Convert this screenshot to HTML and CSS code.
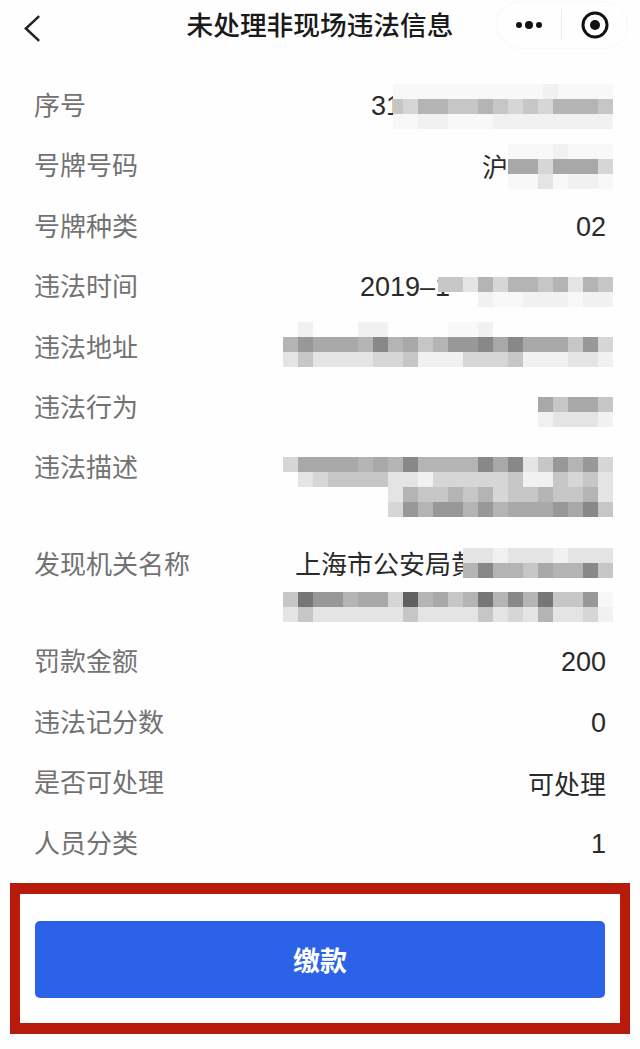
FILE: index.html
```html
<!DOCTYPE html>
<html lang="zh-CN">
<head>
<meta charset="utf-8">
<title>未处理非现场违法信息</title>
<link rel="stylesheet" href="styles.css">
</head>
<body>
<header class="nav">
  <svg class="back" viewBox="0 0 20 30" aria-hidden="true"><path d="M17 2 3 15l14 13" /></svg>
  <h1 class="title">未处理非现场违法信息</h1>
  <div class="capsule">
    <span class="dots"><i></i><i class="mid"></i><i></i></span>
    <span class="divider"></span>
    <svg class="target" viewBox="0 0 28 28" aria-hidden="true"><circle cx="14" cy="14" r="12" /><circle class="core" cx="14" cy="14" r="5" /></svg>
  </div>
</header>
<main class="list">
  <div class="row">
    <span class="label">序号</span>
    <div class="value">31
      <div class="mosaic over8">
        <div class="line"><i class="kx"></i><i class="kx"></i><i class="kx"></i><i class="kx"></i><i class="kx"></i><i class="kx"></i><i class="kx"></i><i class="kx"></i><i class="kx"></i><i class="kx"></i><i class="kf"></i><i class="kx"></i><i class="kx"></i><i class="kx"></i><i class="kx n10"></i></div>
        <div class="line"><i class="kc n10"></i><i class="kd"></i><i class="kb"></i><i class="kb"></i><i class="kc"></i><i class="kc"></i><i class="kb"></i><i class="kc"></i><i class="kd"></i><i class="kc"></i><i class="kd"></i><i class="kb"></i><i class="kb"></i><i class="kb"></i><i class="kc"></i></div>
        <div class="line"><i class="kx n10"></i><i class="kx"></i><i class="kf"></i><i class="kf"></i><i class="kx"></i><i class="kx"></i><i class="kx"></i><i class="kf"></i><i class="kf"></i><i class="kf"></i><i class="kf"></i><i class="kf"></i><i class="kf"></i><i class="kf"></i><i class="kf"></i></div>
      </div>
    </div>
  </div>
  <div class="row">
    <span class="label">号牌号码</span>
    <div class="value cjk">沪
      <div class="mosaic">
        <div class="line"><i class="kx"></i><i class="kx"></i><i class="kx"></i><i class="kf"></i><i class="kx"></i><i class="kx"></i><i class="kx"></i></div>
        <div class="line"><i class="ka"></i><i class="ka"></i><i class="kd"></i><i class="ka"></i><i class="ka"></i><i class="ka"></i><i class="kd"></i></div>
        <div class="line"><i class="kx"></i><i class="kx"></i><i class="ke"></i><i class="kx"></i><i class="kf"></i><i class="kf"></i><i class="kx"></i></div>
      </div>
    </div>
  </div>
  <div class="row">
    <span class="label">号牌种类</span>
    <div class="value">02</div>
  </div>
  <div class="row">
    <span class="label">违法时间</span>
    <div class="value">2019–1
      <div class="mosaic up3 over12">
        <div class="line"><i class="k0"></i></div>
        <div class="line"><i class="kc n10"></i><i class="kc"></i><i class="ke"></i><i class="kb"></i><i class="kd"></i><i class="kb"></i><i class="kb"></i><i class="kc"></i><i class="kb"></i><i class="ke"></i><i class="kb"></i><i class="kc"></i></div>
        <div class="line"><i class="k0 n10"></i><i class="k0"></i><i class="k0"></i><i class="kf"></i><i class="kx"></i><i class="kx"></i><i class="kf"></i><i class="kf"></i><i class="kf"></i><i class="kx"></i><i class="kf"></i><i class="kf"></i></div>
      </div>
    </div>
  </div>
  <div class="row">
    <span class="label">违法地址</span>
    <div class="value">
      <div class="mosaic up3">
        <div class="line"><i class="k0"></i><i class="kf"></i><i class="k0"></i><i class="k0"></i><i class="k0"></i><i class="kf"></i><i class="kf"></i><i class="k0"></i><i class="k0"></i><i class="k0"></i><i class="k0"></i><i class="kx"></i><i class="kx"></i><i class="kf"></i><i class="k0"></i><i class="k0"></i><i class="k0"></i><i class="k0"></i><i class="k0"></i><i class="k0"></i><i class="k0"></i><i class="k0"></i></div>
        <div class="line"><i class="kb"></i><i class="k9"></i><i class="ka"></i><i class="ka"></i><i class="ka"></i><i class="kb"></i><i class="k8"></i><i class="kb"></i><i class="ka"></i><i class="kc"></i><i class="kb"></i><i class="k9"></i><i class="k9"></i><i class="k8"></i><i class="ka"></i><i class="k8"></i><i class="ka"></i><i class="ka"></i><i class="ka"></i><i class="kc"></i><i class="k9"></i><i class="kd"></i></div>
        <div class="line"><i class="ke"></i><i class="kc"></i><i class="ke"></i><i class="ke"></i><i class="ke"></i><i class="ke"></i><i class="kd"></i><i class="kd"></i><i class="kc"></i><i class="kf"></i><i class="kf"></i><i class="kf"></i><i class="kd"></i><i class="kd"></i><i class="kd"></i><i class="kc"></i><i class="kf"></i><i class="kf"></i><i class="kf"></i><i class="ke"></i><i class="ke"></i><i class="kf"></i></div>
      </div>
    </div>
  </div>
  <div class="row">
    <span class="label">违法行为</span>
    <div class="value">
      <div class="mosaic down4">
        <div class="line"><i class="ka"></i><i class="kc"></i><i class="ka"></i><i class="ka"></i><i class="kc"></i></div>
        <div class="line"><i class="kf"></i><i class="ke"></i><i class="ke"></i><i class="ke"></i><i class="kf"></i></div>
      </div>
    </div>
  </div>
  <div class="row tall">
    <span class="label">违法描述</span>
    <div class="value">
      <div class="mosaic block">
        <div class="line"><i class="kd"></i><i class="ka"></i><i class="ka"></i><i class="ka"></i><i class="ka"></i><i class="kb"></i><i class="ka"></i><i class="kb"></i><i class="k8"></i><i class="kb"></i><i class="kb"></i><i class="kb"></i><i class="kb"></i><i class="k8"></i><i class="ka"></i><i class="k8"></i><i class="ke"></i><i class="kc"></i><i class="k9"></i><i class="kb"></i><i class="k9"></i><i class="kd"></i></div>
        <div class="line"><i class="k0"></i><i class="ke"></i><i class="kd"></i><i class="kc"></i><i class="kc"></i><i class="kc"></i><i class="kc"></i><i class="ke"></i><i class="ke"></i><i class="kf"></i><i class="kd"></i><i class="kd"></i><i class="kd"></i><i class="kd"></i><i class="kd"></i><i class="kc"></i><i class="kf"></i><i class="kf"></i><i class="kc"></i><i class="kd"></i><i class="kc"></i><i class="ke"></i></div>
        <div class="line"><i class="ke"></i><i class="kb"></i><i class="kc"></i><i class="kc"></i><i class="kb"></i><i class="kc"></i><i class="kb"></i><i class="kd"></i><i class="kc"></i><i class="kc"></i><i class="kb"></i><i class="kc"></i><i class="kc"></i><i class="kb"></i><i class="ke"></i></div>
        <div class="line"><i class="kd"></i><i class="k9"></i><i class="kb"></i><i class="k9"></i><i class="k9"></i><i class="kb"></i><i class="k9"></i><i class="kb"></i><i class="ka"></i><i class="ka"></i><i class="ka"></i><i class="k9"></i><i class="ka"></i><i class="k8"></i><i class="kc"></i></div>
      </div>
    </div>
  </div>
  <div class="row tall">
    <span class="label">发现机关名称</span>
    <div class="value stack">
      <div class="first">上海市公安局黄
        <div class="mosaic overlap">
          <div class="line"><i class="ke"></i><i class="ke"></i><i class="kf"></i><i class="ke"></i><i class="ke"></i><i class="ke"></i><i class="kf"></i><i class="ke"></i><i class="ke"></i><i class="ke"></i></div>
          <div class="line"><i class="kb"></i><i class="k8"></i><i class="kb"></i><i class="kb"></i><i class="kc"></i><i class="ka"></i><i class="kb"></i><i class="kb"></i><i class="k8"></i><i class="kc"></i></div>
        </div>
      </div>
      <div class="mosaic second">
        <div class="line"><i class="kc"></i><i class="k7"></i><i class="k9"></i><i class="k9"></i><i class="kb"></i><i class="ka"></i><i class="ka"></i><i class="kd"></i><i class="k6"></i><i class="kb"></i><i class="ka"></i><i class="kc"></i><i class="kb"></i><i class="k7"></i><i class="kb"></i><i class="k8"></i><i class="kb"></i><i class="k7"></i><i class="kc"></i><i class="kc"></i><i class="k9"></i><i class="kx"></i></div>
        <div class="line"><i class="ke"></i><i class="kc"></i><i class="ke"></i><i class="ke"></i><i class="ke"></i><i class="ke"></i><i class="ke"></i><i class="ke"></i><i class="kc"></i><i class="ke"></i><i class="ke"></i><i class="ke"></i><i class="ke"></i><i class="kc"></i><i class="ke"></i><i class="kd"></i><i class="ke"></i><i class="kb"></i><i class="ke"></i><i class="ke"></i><i class="kd"></i><i class="kf"></i></div>
      </div>
    </div>
  </div>
  <div class="row">
    <span class="label">罚款金额</span>
    <div class="value">200</div>
  </div>
  <div class="row">
    <span class="label">违法记分数</span>
    <div class="value">0</div>
  </div>
  <div class="row">
    <span class="label">是否可处理</span>
    <div class="value cjk">可处理</div>
  </div>
  <div class="row">
    <span class="label">人员分类</span>
    <div class="value">1</div>
  </div>
</main>
<section class="highlight">
  <button class="pay" type="button">缴款</button>
</section>
</body>
</html>
```

FILE: styles.css
```css
* { box-sizing: border-box; }

html, body {
  margin: 0;
  height: 100%;
}

body {
  background: #fefefe;
  font-family: "Liberation Sans", "Noto Sans CJK SC", sans-serif;
  color: #2a2a2a;
  overflow: hidden;
}

.nav {
  height: 52px;
  padding-bottom: 6px;
  display: flex;
  align-items: center;
  justify-content: center;
  position: relative;
}

.title {
  margin: 0;
  font-size: 26.7px;
  font-weight: 500;
  color: #1a1a1a;
  font-family: "Noto Sans CJK SC", sans-serif;
}

.back {
  position: absolute;
  left: 23px;
  top: 14px;
  width: 19px;
  height: 29px;
}

.back path {
  fill: none;
  stroke: #222;
  stroke-width: 2.6;
}

.capsule {
  position: absolute;
  left: 496px;
  top: 1px;
  width: 132px;
  height: 48px;
  border: 1px solid #f8f8f8;
  border-radius: 24px;
  display: flex;
  align-items: center;
}

.dots {
  width: 64px;
  display: flex;
  justify-content: center;
  align-items: center;
  gap: 3px;
}

.dots i {
  width: 6px;
  height: 6px;
  border-radius: 50%;
  background: #111;
}

.dots i.mid {
  width: 8px;
  height: 8px;
}

.divider {
  width: 1px;
  height: 32px;
  background: #ececec;
}

.target {
  width: 28px;
  height: 28px;
  margin-left: 19px;
}

.target circle {
  fill: none;
  stroke: #111;
  stroke-width: 3;
}

.target .core {
  fill: #111;
  stroke: none;
}

.list {
  padding-top: 24px;
}

.row {
  display: flex;
  justify-content: space-between;
  align-items: flex-start;
  padding: 12px 34px;
  height: 60.4px;
}

.row.tall {
  height: 97px;
}

.label {
  font-family: "Noto Sans CJK SC", sans-serif;
  font-size: 26px;
  font-weight: 400;
  line-height: 36.4px;
  margin-top: -2px;
  color: #727272;
  white-space: nowrap;
}

.value {
  display: flex;
  align-items: center;
  justify-content: flex-end;
  font-size: 27px;
  line-height: 36.4px;
  min-height: 36.4px;
  white-space: nowrap;
  font-family: "Liberation Sans", "Noto Sans CJK SC", sans-serif;
}

.value.cjk {
  font-size: 26px;
  font-family: "Noto Sans CJK SC", sans-serif;
}

.value.stack {
  flex-direction: column;
  align-items: flex-end;
}

.first {
  display: flex;
  align-items: center;
  margin-top: -2px;
  font-size: 26px;
  font-family: "Noto Sans CJK SC", sans-serif;
}

.mosaic {
  display: flex;
  flex-direction: column;
  margin: -12px -7px -12px 0;
  filter: blur(0.6px);
}

.mosaic.up3 { transform: translateY(-3px); }
.mosaic.down4 { transform: translateY(4px); }
.mosaic.over8 { margin-left: -8px; }
.mosaic.over12 { margin-left: -12px; }
.mosaic.block { margin-top: 6.6px; margin-bottom: 0; }
.mosaic.overlap { margin-left: -14px; transform: translateY(-1px); }
.mosaic.second { margin-top: 8px; margin-bottom: 0; transform: translateY(2px); }

.line {
  display: flex;
  justify-content: flex-end;
  height: 15px;
}

.line i {
  width: 15px;
  height: 15px;
  flex: none;
}

.line i.n10 { width: 10px; }

.k0 { background: transparent; }
.k6 { background: #606060; }
.k7 { background: #767676; }
.k8 { background: #888; }
.k9 { background: #989898; }
.ka { background: #a8a8a8; }
.kb { background: #b4b4b4; }
.kc { background: #c6c6c6; }
.kd { background: #d6d6d6; }
.ke { background: #e4e4e4; }
.kf { background: #f1f1f1; }
.kx { background: #f8f8f8; }

.highlight {
  margin: 9px 10px 0;
  height: 151px;
  border: solid #b81a0c;
  border-width: 11px 10px;
  background: #fff;
  padding: 27px 15px 25px;
}

.pay {
  display: block;
  width: 100%;
  height: 77px;
  border: 0;
  border-radius: 5px;
  background: #2b62e8;
  color: #fff;
  font-family: "Noto Sans CJK SC", sans-serif;
  font-size: 27px;
  font-weight: 700;
}
```
